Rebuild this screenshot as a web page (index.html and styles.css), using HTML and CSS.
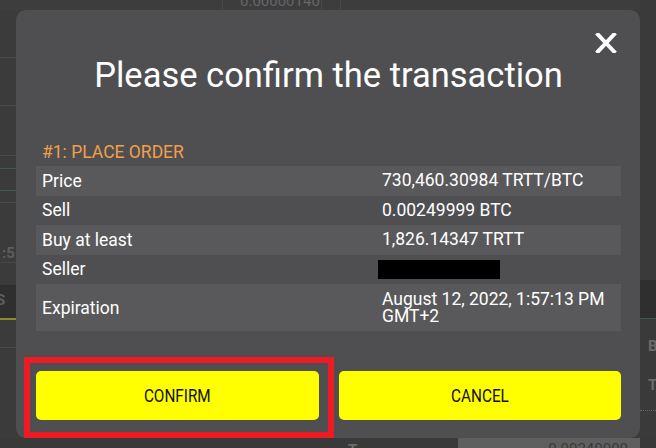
FILE: index.html
```html
<!DOCTYPE html>
<html>
<head>
<meta charset="utf-8">
<link rel="stylesheet" href="styles.css">
</head>
<body>
<div class="backdrop">
  <div class="bg-top">
    <span class="bg-vline v1"></span>
    <span class="bg-num">0.00000140</span>
    <span class="bg-vline v2"></span>
    <span class="bg-vline v3"></span>
  </div>
  <div class="bg-left">
    <div class="hl" style="top:57px"></div>
    <div class="hl" style="top:105px"></div>
    <div class="hl" style="top:155px"></div>
    <div class="hl green" style="top:168px"></div>
    <div class="hl green" style="top:190px"></div>
    <div class="hl" style="top:202px"></div>
    <div class="bg-t1">:5</div>
    <div class="hl" style="top:262px"></div>
    <div class="bg-dark">S</div>
    <div class="hl yellow" style="top:318px"></div>
    <div class="hl" style="top:347px"></div>
  </div>
  <div class="bg-right">
    <div class="bg-rdark"></div>
    <div class="hl green" style="top:318px"></div>
    <div class="bg-r1">B</div>
    <div class="bg-r2">T</div>
    <div class="hl dotted" style="top:410px"></div>
  </div>
  <div class="bg-bottom">
    <span class="bb-t">T</span>
    <div class="bb-light"><span>0.00240000</span></div>
  </div>
</div>

<div class="modal">
  <button class="close" aria-label="Close">
    <svg width="22" height="20" viewBox="0 0 22 20"><path d="M3 1.5 L19 18.5 M19 1.5 L3 18.5" stroke="#fff" stroke-width="4" stroke-linecap="square"/></svg>
  </button>
  <h1 class="title">Please confirm the transaction</h1>
  <div class="section-head">#1: PLACE ORDER</div>
  <div class="details">
    <div class="row light"><div class="lbl">Price</div><div class="val">730,460.30984 TRTT/BTC</div></div>
    <div class="row"><div class="lbl">Sell</div><div class="val">0.00249999 BTC</div></div>
    <div class="row light"><div class="lbl">Buy at least</div><div class="val">1,826.14347 TRTT</div></div>
    <div class="row"><div class="lbl">Seller</div><div class="val"><span class="redact"></span></div></div>
    <div class="row light tall"><div class="lbl">Expiration</div><div class="val">August 12, 2022, 1:57:13 PM GMT+2</div></div>
  </div>
  <div class="actions">
    <button class="btn"><span>CONFIRM</span></button>
    <button class="btn"><span>CANCEL</span></button>
  </div>
</div>
<div class="highlight"></div>
</body>
</html>
```

FILE: styles.css
```css
* { box-sizing: border-box; }
html, body { margin: 0; padding: 0; }
body {
  width: 656px;
  height: 448px;
  overflow: hidden;
  background: #3b3b3b;
  font-family: Roboto, "Liberation Sans", sans-serif;
  position: relative;
}
.backdrop { position: absolute; inset: 0; }
.bg-top { position: absolute; left: 0; top: 0; width: 656px; height: 10px; background: #3d3d3d; overflow: hidden; }
.bg-vline { position: absolute; top: 0; width: 1px; height: 10px; background: #4a4a4a; }
.v1 { left: 222px; } .v2 { left: 321px; } .v3 { left: 340px; }
.bg-num { position: absolute; left: 240px; top: -8px; font-size: 15px; color: #666; }
.bg-left { position: absolute; left: 0; top: 0; width: 16px; height: 448px; overflow: hidden; }
.hl { position: absolute; left: 0; width: 100%; height: 1px; background: #484848; }
.hl.green { background: #3f5a4c; }
.hl.yellow { background: #8b8a2c; height: 2px; }
.hl.dotted { background: none; border-top: 1px dotted #666; }
.bg-t1 { position: absolute; left: 2px; top: 244px; font-size: 15px; font-weight: 700; color: #5e5e5e; }
.bg-dark { position: absolute; left: 0; top: 285px; width: 16px; height: 33px; background: #2f2f2f; color: #5e5e5e; font-size: 15px; font-weight: 700; padding: 6px 0 0 0; text-indent: -4px; }
.bg-right { position: absolute; left: 640px; top: 0; width: 16px; height: 448px; background: #3a3a3a; overflow: hidden; }
.bg-rdark { position: absolute; left: 0; top: 280px; width: 16px; height: 38px; background: #2f2f2f; }
.bg-r1 { position: absolute; left: 8px; top: 337px; font-size: 15px; font-weight: 700; color: #6a6a6a; }
.bg-r2 { position: absolute; left: 8px; top: 376px; font-size: 15px; font-weight: 700; color: #6a6a6a; }
.bg-bottom { position: absolute; left: 0; top: 438px; width: 656px; height: 10px; background: #393939; overflow: hidden; }
.bb-t { position: absolute; left: 348px; top: 3px; font-size: 15px; color: #6a6a6a; font-weight: 700; }
.bb-light { position: absolute; left: 458px; top: 0; width: 182px; height: 10px; background: #5f5f5f; overflow: hidden; }
.bb-light span { position: absolute; right: 12px; top: 2px; font-size: 15px; color: #3a3a3a; }

.modal {
  position: absolute;
  left: 16px;
  top: 10px;
  width: 624px;
  height: 428px;
  background: #4f4f51;
  border-radius: 10px;
  padding: 45px 19px 18px 20px;
  display: flex;
  flex-direction: column;
}
.close {
  position: absolute;
  right: 23px;
  top: 23px;
  width: 22px;
  height: 20px;
  padding: 0;
  border: 0;
  background: none;
  display: flex;
}
.title {
  margin: 0;
  font-size: 34.5px;
  line-height: 40px;
  font-weight: 400;
  color: #fff;
  text-align: center;
}
.section-head {
  margin-top: 46.5px;
  font-size: 17.5px;
  line-height: 20px;
  color: #f0a04b;
  padding-left: 6px;
}
.details { margin-top: 4.5px; display: flex; flex-direction: column; }
.row {
  display: grid;
  grid-template-columns: 340px 1fr;
  align-items: center;
  height: 29.5px;
  color: #fff;
  font-size: 17.5px;
}
.row.light { background: #59595b; }
.row.tall { height: 47px; }
.lbl { padding-left: 6px; }
.val { padding-left: 6px; padding-right: 8px; line-height: 17px; }
.redact { display: block; width: 122px; height: 19px; background: #000; margin-left: -4px; }
.actions {
  margin-top: auto;
  display: grid;
  grid-template-columns: 1fr 1fr;
  gap: 20px;
}
.btn {
  height: 49px;
  background: #ffff00;
  border: 0;
  border-radius: 5px;
  font-family: Roboto, "Liberation Sans", sans-serif;
  font-size: 18px;
  color: #111;
  display: flex;
  align-items: center;
  justify-content: center;
  padding: 0;
}
.btn span { display: inline-block; transform: scaleX(0.85); }
.highlight {
  position: absolute;
  left: 24px;
  top: 357px;
  width: 310px;
  height: 81px;
  border: 6px solid #ed1c24;
}
```
